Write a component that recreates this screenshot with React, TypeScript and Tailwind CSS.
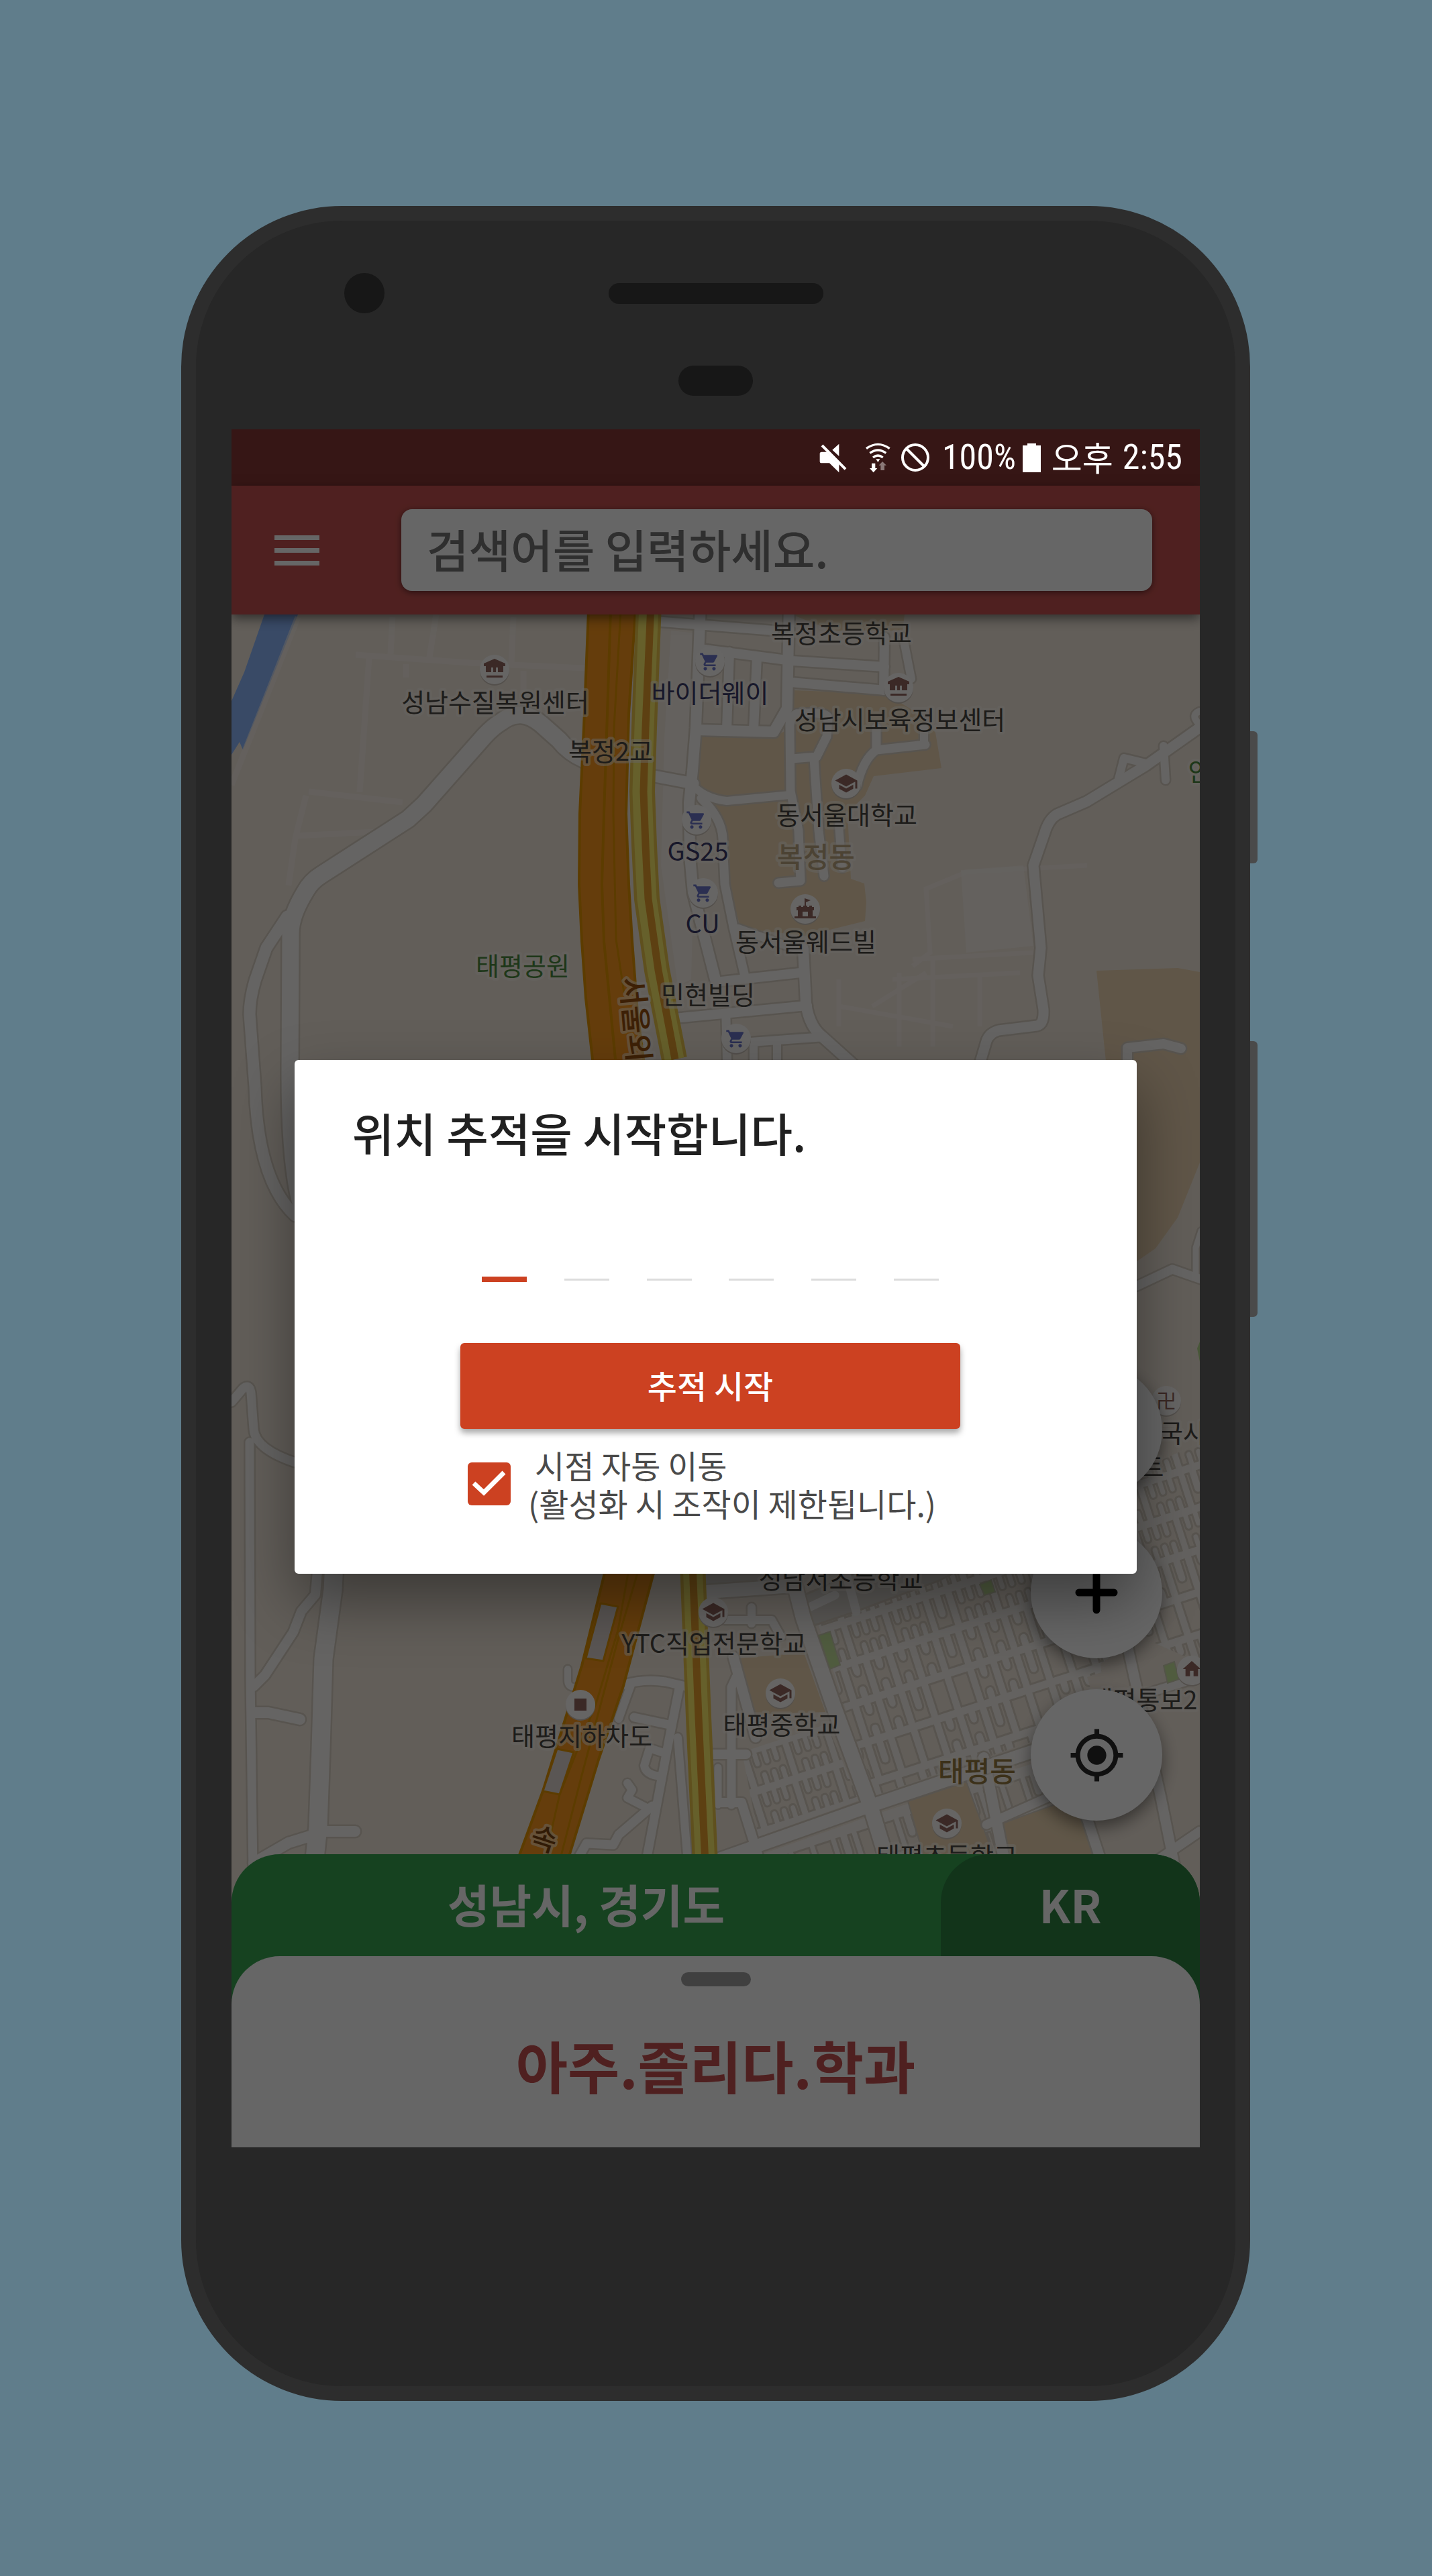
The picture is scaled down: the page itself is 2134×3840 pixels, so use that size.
import React from "react";
import { MdHome, MdMyLocation, MdSchool, MdShoppingCart } from "react-icons/md";

const CASING = "#dbd3c6";
const LAND = "#f5ebdf";
const SAND = "#efd8b4";
const ROAD = "#fdfaf8";

type Road = [string, number];

const westRoads: Road[] = [
  ["M871 1132 Q848 1122 833 1103 L806 1079 Q776 1054 747 1076 Q735 1083 722 1097 L632 1199 L608 1221 L479 1304 Q463 1314 455 1329 Q433 1365 433 1391 L432 1600 Q432 1740 450 1800", 25],
  ["M428 1366 L397 1413 L380 1462 Q372 1490 372 1512 L380 1620 Q384 1760 440 1812", 17],
  ["M345 2090 L362 2070 Q372 2062 374 2076 L378 2130 Q380 2160 440 2180", 13],
  ["M372 2150 L373 2500 L377 2790", 13],
  ["M498 2330 L496 2370 L482 2473 L478 2607 L474 2723 L467 2790", 27],
  ["M474 2330 L470 2377 L449 2402 L437 2433 L395 2497 L378 2514", 14],
  ["M378 2553 H400 L447 2563", 16],
  ["M480 2730 H529", 16],
  ["M472 2734 L430 2747 L378 2777", 16],
];

const townRoads: Road[] = [
  ["M975 926 L1153 940", 14],
  ["M1044 900 L1037 1085 L1032 1149 L1027 1196 L1028 1276 L1033 1331 L1066 1460", 16],
  ["M1050 968 L1180 985 L1318 994", 14],
  ["M1176 900 L1173 1056 L1153 1091 L1038 1088", 16],
  ["M1178 1017 L1320 1029", 14],
  ["M1087 972 L1083 1088", 14],
  ["M1128 980 L1123 1088", 14],
  ["M1318 950 L1317 1029", 14],
  ["M1346 950 L1358 1012", 12],
  ["M1187 1064 Q1176 1070 1177 1085 L1178 1179 L1190 1238 L1193 1313 L1160 1316", 13],
  ["M1180 1131 L1217 1128 L1232 1098 L1234 1070 Q1232 1060 1187 1064", 13],
  ["M1213 1130 L1220 1238 L1228 1306", 13],
  ["M1250 1230 L1255 1294", 12],
  ["M1277 1172 Q1286 1132 1306 1118 L1379 1110", 13],
  ["M1306 1084 V1116", 13],
  ["M1377 1085 V1110", 12],
  ["M970 1156 L1033 1168", 17],
  ["M1030 1168 Q1048 1190 1083 1194 L1177 1185", 12],
  ["M1045 1190 Q1076 1220 1077 1250 L1080 1318 L1093 1382 L1111 1460", 13],
  ["M1066 1464 L1193 1450", 14],
  ["M1004 1518 L1203 1499", 14],
  ["M1197 1414 L1201 1496 Q1206 1530 1225 1545 L1275 1590", 16],
  ["M1084 1556 L1222 1546", 13],
  ["M1082 1518 L1084 1600", 13],
  ["M1123 1556 V1600", 12],
  ["M1158 1554 V1600", 12],
  ["M1100 1384 L1150 1402 L1197 1418", 12],
  ["M1790 1083 L1708 1141 L1619 1195 L1575 1214 Q1562 1222 1556 1244 L1540 1290 L1551 1413 L1547 1454 L1555 1505 Q1556 1527 1545 1529 L1488 1536 Q1474 1540 1470 1552 L1456 1600", 15],
  ["M1666 1165 L1675 1130 L1712 1139", 12],
  ["M1734 1112 L1737 1163", 12],
  ["M1788 1060 Q1775 1065 1784 1076", 10],
  ["M1760 1563 L1734 1556 L1680 1562 V1600", 14],
  ["M1680 1921 L1694 1917 L1747 1892 L1790 1907", 13],
  ["M1790 1835 L1782 1860 V1900", 9],
];

const southRoads: Road[] = [
  ["M930 2511 Q960 2502 992 2507 L1022 2514", 13],
  ["M940 2512 L922 2562", 12],
  ["M1012 2517 L997 2593 L960 2790", 13],
  ["M945 2560 L997 2571", 13],
  ["M1010 2590 L1026 2790", 12],
  ["M992 2614 L968 2606 L960 2632 Q962 2646 985 2648", 12],
  ["M972 2692 L922 2735 L914 2750 L874 2748 L856 2780", 13],
  ["M935 2658 L942 2668 L935 2680 L962 2694", 12],
  ["M846 2488 V2505 Q846 2515 856 2515", 10],
  ["M1093 2470 L1126 2590", 15],
  ["M1097 2500 L1090 2515 V2690", 13],
  ["M1040 2615 H1112", 14],
  ["M1060 2687 H1105 L1134 2780", 14],
  ["M1070 2635 V2690", 11],
  ["M1120 2420 V2396", 12],
  ["M1080 2415 H1150 L1164 2440", 12],
  ["M1040 2374 L1180 2364", 20],
  ["M1176 2330 L1197 2412 L1243 2545 L1297 2692 L1330 2800", 22],
  ["M1062 2775 L1297 2692 L1550 2607 L1650 2570", 19],
];

const eastRoads: Road[] = [
  ["M1466 2620 L1500 2790", 16],
  ["M1470 2720 L1560 2680 L1610 2650", 13],
  ["M1675 2430 L1730 2680 L1752 2790", 15],
  ["M1610 2680 L1646 2790", 15],
  ["M1700 2790 L1788 2730", 14],
  ["M1690 2530 L1788 2500", 13],
];

function Roads({ roads }: { roads: Road[] }) {
  return (
    <g fill="none" strokeLinecap="round" strokeLinejoin="round">
      {roads.map(([d, w]) => (
        <path key={"c" + d} d={d} stroke={CASING} strokeWidth={w + 5} />
      ))}
      {roads.map(([d, w]) => (
        <path key={"r" + d} d={d} stroke={ROAD} strokeWidth={w} />
      ))}
    </g>
  );
}

const plainBlock = "M0 0H23V46H0Z";
const hourglassBlock = "M0 0H5V6Q5 16 12 16Q18 16 18 6V0H23V46H18V38Q18 30 12 30Q5 30 5 38V46H0Z";
const cupBlock = "M0 0H5V24Q5 32 12 32Q18 32 18 24V0H23V46H0Z";
const combBlock = "M0 0H4V14Q4 20 9 20Q14 20 14 14V0H19V14Q19 20 24 20Q29 20 29 14V0H34V14Q34 20 39 20Q44 20 44 14V0H52V46H48V34Q48 28 43 28Q38 28 38 34V46H34V34Q34 28 29 28Q24 28 24 34V46H19V34Q19 28 14 28Q9 28 9 34V46H0Z";

function BlockRow({ row, from, to }: { row: number; from: number; to: number }) {
  const blocks: React.ReactNode[] = [];
  let x = from;
  let i = 0;
  while (x < to) {
    const kind = (i + row * 2 + 40) % 5;
    const comb = row < 1 ? kind !== 0 : kind === 3 && row > 3;
    const shape = comb ? combBlock : kind === 0 ? cupBlock : row > 1 && kind < 3 ? plainBlock : hourglassBlock;
    blocks.push(<path key={i} d={shape} transform={`translate(${x} ${row * 60})`} />);
    x += comb ? 64 : 36;
    i += 1;
  }
  return <>{blocks}</>;
}

function Blocks() {
  return (
    <g>
      <clipPath id="east-blocks">
        <path d="M1200 2390L1420 2340L1560 2250L1700 2190L1790 2150V2490L1690 2520L1550 2592L1306 2676Z" />
      </clipPath>
      <clipPath id="west-blocks">
        <path d="M1106 2612L1232 2570L1280 2684L1130 2738Z" />
      </clipPath>
      <clipPath id="low-blocks">
        <path d="M1130 2766L1300 2706L1560 2622V2850H1130Z" />
      </clipPath>
      <g clipPath="url(#east-blocks)">
        <path d="M1190 2330L1790 2130V2520L1306 2690Z" fill="#faf6f1" />
        <g transform="translate(1222 2438) rotate(-18)" fill={LAND} stroke={CASING} strokeWidth="3">
          {[-5, -4, -3, -2, -1, 0, 1, 2, 3, 4].map((row) => (
            <BlockRow key={row} row={row} from={-120} to={640} />
          ))}
        </g>
      </g>
      <g clipPath="url(#west-blocks)">
        <path d="M1100 2560H1300V2760H1100Z" fill="#faf6f1" />
        <g transform="translate(1110 2620) rotate(-18)" fill={LAND} stroke={CASING} strokeWidth="3">
          {[-1, 0, 1, 2, 3].map((row) => (
            <g key={row} transform={`translate(${row * -4} ${row * 60})`}>
              <BlockRow row={0} from={-30} to={220} />
            </g>
          ))}
        </g>
      </g>
      <g clipPath="url(#low-blocks)">
        <path d="M1100 2600H1600V2860H1100Z" fill="#faf6f1" />
        <g transform="translate(1140 2776) rotate(-18)" fill={LAND} stroke={CASING} strokeWidth="3">
          {[0, 1, 2, 3].map((row) => (
            <g key={row} transform={`translate(0 ${row * 60})`}>
              {Array.from({ length: 16 }, (_, i) => (
                <path key={i} d={i % 3 === 1 ? cupBlock : plainBlock} transform={`translate(${i * 33 - 20} 0)`} />
              ))}
            </g>
          ))}
        </g>
      </g>
    </g>
  );
}

const DARK = "#4a4742";
const SHOP = "#3b3b69";

const labels: { t: string; x: number; y: number; c: string; big?: boolean }[] = [
  { t: "복정초등학교", x: 1254, y: 958, c: DARK },
  { t: "바이더웨이", x: 1058, y: 1047, c: SHOP },
  { t: "성남수질복원센터", x: 738, y: 1061, c: DARK },
  { t: "성남시보육정보센터", x: 1341, y: 1087, c: DARK },
  { t: "복정2교", x: 910, y: 1134, c: DARK },
  { t: "동서울대학교", x: 1262, y: 1229, c: DARK },
  { t: "복정동", x: 1216, y: 1293, c: "#bfa783", big: true },
  { t: "GS25", x: 1040, y: 1283, c: SHOP },
  { t: "CU", x: 1047, y: 1391, c: SHOP },
  { t: "동서울웨드빌", x: 1201, y: 1418, c: DARK },
  { t: "태평공원", x: 779, y: 1454, c: "#4d8a40" },
  { t: "민현빌딩", x: 1055, y: 1497, c: DARK },
  { t: "안", x: 1788, y: 1164, c: "#4d8a40" },
  { t: "국사", x: 1763, y: 2150, c: DARK },
  { t: "트", x: 1717, y: 2201, c: DARK },
  { t: "성남서초등학교", x: 1253, y: 2368, c: DARK },
  { t: "YTC직업전문학교", x: 1064, y: 2464, c: DARK },
  { t: "태평중학교", x: 1165, y: 2585, c: DARK },
  { t: "태평지하차도", x: 867, y: 2602, c: DARK },
  { t: "태평통보2", x: 1704, y: 2548, c: DARK },
  { t: "태평동", x: 1456, y: 2656, c: "#967a43", big: true },
  { t: "태평초등학교", x: 1411, y: 2781, c: DARK },
];

const pins: [string, number, number][] = [
  ["cart", 1058, 986],
  ["cart", 1038, 1222],
  ["cart", 1048, 1331],
  ["cart", 1097, 1548],
  ["hall", 737, 998],
  ["hall", 1339, 1025],
  ["school", 1261, 1168],
  ["fort", 1200, 1355],
  ["school", 1063, 2403],
  ["school", 1163, 2524],
  ["school", 1411, 2718],
  ["square", 865, 2541],
  ["home", 1776, 2490],
  ["temple", 1738, 2088],
];

function PinGlyph({ kind, x, y }: { kind: string; x: number; y: number }) {
  if (kind === "cart") return <MdShoppingCart x={x - 16} y={y - 15} size={31} color="#6c77cb" />;
  if (kind === "school") return <MdSchool x={x - 18} y={y - 18} size={36} color="#94685f" />;
  if (kind === "home") return <MdHome x={x - 16} y={y - 18} size={32} color="#94685f" />;
  if (kind === "fort")
    return (
      <g transform={`translate(${x} ${y})`} fill="#94685f">
        <path d="M-13 -3H-10V-5H-6V-3H-3V-5H3V-3H6V-5H10V-3H13V2H11V11H16V14H-16V11H-11V2H-13ZM-4 4V11H4V4Z" fillRule="evenodd" />
        <path d="M-1 -16L8 -13L1 -10V-4H-1Z" />
      </g>
    );
  if (kind === "hall")
    return (
      <g transform={`translate(${x} ${y})`} fill="#94685f">
        <path d="M0 -16L16 -9V-5H13V4H5V-3H2V4H-2V-3H-5V4H-13V-5H-16V-9Z" />
        <path d="M-12 9H12V12H-12Z" />
      </g>
    );
  if (kind === "square") return <rect x={x - 9} y={y - 9} width="18" height="18" fill="#94685f" />;
  return (
    <text x={x} y={y + 11} textAnchor="middle" fontSize="30" fill="#94685f">
      卍
    </text>
  );
}

function MapCanvas() {
  return (
    <svg
      className="block h-full w-full"
      viewBox="345 916 1443 1920"
      preserveAspectRatio="xMidYMin slice"
      role="img"
      aria-label="지도"
      fontFamily="'Noto Sans CJK KR', sans-serif"
    >
      <rect x="345" y="900" width="1443" height="1960" fill={LAND} />
      <path d="M394 916H444L362 1118L357 1106L345 1125V1045L364 1002Z" fill="#8fb9ff" />

      <g fill="none" stroke="#fbf5ef" strokeWidth="9" opacity=".6">
        <path d="M444 920L345 1170M530 976L700 988L872 996M550 980L536 1181M460 1180L600 1196M456 1186L440 1250L430 1320M650 916L640 980M765 920L762 990M585 920L582 975M605 990V1010M780 1000V1040M440 1246L560 1240" />
        <path d="M1620 1290L1440 1300L1380 1325L1386 1420L1360 1440M1360 1430L1540 1420M1330 1460L1520 1450M1300 1500L1380 1450M1250 1500L1420 1530M1390 1430V1560M1340 1450V1560M1460 1450V1530M1250 1460V1530" strokeWidth="7" />
      </g>
      <path d="M1432 1297L1525 1290L1540 1410L1440 1420Z" fill="#fbf6f1" opacity=".6" />
      <path d="M1000 940L1045 945L1030 1460L1010 1470L985 1290L990 1100Z" fill="#fbf6f1" opacity=".6" />

      <g fill={SAND}>
        <path d="M1180 916H1348L1345 940H1240Z" />
        <path d="M1041 1098L1150 1100L1177 1086L1176 1185L1083 1192L1040 1170Z" />
        <path d="M1182 1029L1320 1034L1362 1060L1394 1092L1403 1145L1302 1157L1289 1186L1263 1212L1268 1310L1288 1317L1291 1345L1289 1373L1200 1395L1104 1384L1084 1318L1080 1240L1050 1198L1178 1185Z" />
        <path d="M1634 1447L1755 1443L1788 1449V1733L1755 1815L1722 1861L1680 1890Z" />
        <path d="M1098 2472L1198 2464L1230 2552L1120 2556Z" />
      </g>
      <path d="M1050 2330H1180V2358L1052 2364Z" fill="#e2dcd4" />
      <path d="M1784 2010L1788 2000V2030Z" fill="#b7dd8f" />

      <Roads roads={westRoads} />
      <Roads roads={townRoads} />
      <Blocks />
      <path d="M1197 2378L1300 2335H1440L1400 2356L1276 2402L1204 2426Z" fill="#e2dcd4" stroke={CASING} strokeWidth="3" />
      <path d="M1206 2396L1244 2378M1262 2350L1276 2402" stroke={ROAD} strokeWidth="13" strokeLinecap="round" />
      <path d="M1640 2480L1700 2440L1790 2480V2850H1560L1560 2620L1650 2560Z" fill={LAND} />
      <path d="M1620 2500L1680 2480L1710 2620L1650 2600Z" fill={LAND} />
      <g fill={SAND} stroke={CASING} strokeWidth="2">
        <path d="M1353 2685L1440 2656L1480 2764L1380 2780Z" />
        <path d="M1483 2722L1572 2690L1608 2700L1634 2784H1500Z" />
      </g>
      <Roads roads={eastRoads} />
      <Roads roads={southRoads} />
      <g fill="#c8e69e" stroke="#cfd3b4" strokeWidth="2">
        <path d="M1220 2438L1237 2432L1252 2482L1237 2488Z" />
        <path d="M1460 2362L1477 2355L1483 2373L1467 2378Z" />
        <path d="M1734 2483L1750 2477L1757 2503L1740 2509Z" />
      </g>

      <g strokeLinejoin="round">
        <path
          d="M877 910L870 1085L864 1213L863 1318L867 1403L873 1488L883 1579L901 1800L910 2200L901 2345L867 2483L809 2670L765 2790H841L892 2623L929 2513L974 2345L990 2100L985 1800L959 1579L950 1509L942 1403L937 1318L933 1213L937 1064L947 910Z"
          fill="#fd991e"
          stroke="#e69600"
          strokeWidth="4"
        />
        <g fill="none" stroke="#e69600" strokeWidth="3">
          <path d="M910 910L905 1064L900 1213L897 1318L900 1403L917 1579" strokeWidth="4" />
          <path d="M925 910L915 1085L914 1213L918 1400L930 1480" />
          <path d="M936 2345L921 2430L888 2540L834 2675L808 2790M950 2345L922 2440L866 2650L830 2790" />
        </g>
        <path d="M895 2390L921 2395L899 2476L873 2472ZM830 2607L855 2612L834 2675L809 2670Z" fill="#e1d7d2" stroke="#e69600" strokeWidth="3" />
        <g fill="none">
          <path d="M967 900L960 1085L957 1180L960 1260L964 1340L979 1446L1005 1579M1032 2330L1041 2560L1052 2800" stroke="#edc94c" strokeWidth="38" />
          <path d="M967 900L960 1085L957 1180L960 1260L964 1340L979 1446L1005 1579M1032 2330L1041 2560L1052 2800" stroke="#fff06c" strokeWidth="29" />
          <path d="M970 900L962 1085L959 1180L962 1260L966 1340L981 1446L1006 1579M1032 2330L1041 2560L1052 2800" stroke="#e9a02d" strokeWidth="11" />
        </g>
      </g>

      {pins.map(([kind, x, y]) => (
        <g key={`${x}-${y}`}>
          <circle cx={x} cy={y + 2} r="22" fill="#cfc6bb" />
          <circle cx={x} cy={y} r="22" fill="#fffdfb" />
          <PinGlyph kind={kind} x={x} y={y} />
        </g>
      ))}

      <g stroke="#fffaf2" strokeOpacity=".55" strokeWidth="8" strokeLinejoin="round" paintOrder="stroke" textAnchor="middle">
        {labels.map((l) => (
          <text key={l.t} x={l.x} y={l.y} fill={l.c} fontSize={l.big ? 42 : 38} fontWeight={l.big ? 500 : 400}>
            {l.t}
          </text>
        ))}
        <text transform="translate(925 1458) rotate(85)" textAnchor="start" fontSize="46" fontWeight="500" fill="#98520f">
          서울외
        </text>
        <text transform="translate(806 2756) rotate(18)" fontSize="42" fontWeight="500" fill="#7c450f">
          속
        </text>
      </g>
    </svg>
  );
}

function StatusBar() {
  return (
    <div className="flex h-[84px] shrink-0 items-center justify-end bg-[#361615] pr-[26px] text-white">
      <svg className="mr-[27px] h-[45px] w-[42px]" viewBox="50 55 126 135" fill="currentColor" aria-hidden="true">
        <path d="M52 104q0-8 8-8H84L138 150V188L95 146H60q-8 0-8-8zM138 60V115L108 87z" />
        <path d="M62 67L167 173" stroke="currentColor" strokeWidth="12" />
      </svg>
      <svg className="mr-[15px] h-[45px] w-[37px]" viewBox="254 55 111 135" fill="none" stroke="currentColor" strokeWidth="10" aria-hidden="true">
        <path d="M257 81Q309 43 361 81M273 101Q309 75 345 101M287 121Q309 103 331 121" />
        <path d="M300 128H318L309 142Z" fill="currentColor" stroke="none" />
        <path d="M281 147h16v22h9l-17 19-17-19h9z" fill="currentColor" stroke="none" />
        <path d="M321 178h17v-22h9l-18-17-16 17h8z" fill="#8a7877" stroke="none" />
      </svg>
      <svg className="mr-[18px] h-[44px] w-[44px]" viewBox="0 0 44 44" fill="none" stroke="currentColor" strokeWidth="4" aria-hidden="true">
        <circle cx="22" cy="22" r="19" />
        <path d="M8 8L36 36" />
      </svg>
      <span className="font-['Roboto_Condensed',Roboto,sans-serif] text-[52px] leading-none">100%</span>
      <svg className="mr-[16px] ml-[10px] h-[43px] w-[27px]" viewBox="0 0 27 43" fill="currentColor" aria-hidden="true">
        <path d="M7 0H20V3H27V43H0V3H7z" />
      </svg>
      <span className="pb-1 font-['Noto_Sans_CJK_KR',sans-serif] text-[50px] leading-none">오후</span>
      <span className="ml-[14px] font-['Roboto_Condensed',Roboto,sans-serif] text-[52px] leading-none">2:55</span>
    </div>
  );
}

function AppBar() {
  return (
    <header className="relative z-10 flex h-[192px] shrink-0 items-center bg-[#c65250] pr-[71px] pl-[64px] shadow-[0_6px_16px_rgba(0,0,0,0.5)]">
      <button type="button" aria-label="메뉴" className="flex w-[67px] flex-col gap-3">
        <span className="h-[7px] w-full bg-white" />
        <span className="h-[7px] w-full bg-white" />
        <span className="h-[7px] w-full bg-white" />
      </button>
      <input
        type="text"
        aria-label="검색"
        placeholder="검색어를 입력하세요."
        className="ml-[122px] h-[122px] min-w-0 flex-1 rounded-2xl bg-white px-[38px] pb-1.5 text-[68px] font-medium text-[#222] shadow-[0_2px_10px_rgba(0,0,0,0.5)] outline-none placeholder:text-[#757575]"
      />
    </header>
  );
}

function MapButtons() {
  const fab = "flex size-[196px] items-center justify-center rounded-full bg-white shadow-[0_10px_24px_rgba(0,0,0,0.45)]";
  return (
    <div className="absolute right-[56px] bottom-[122px] flex flex-col gap-[46px]">
      <button type="button" aria-label="축소" className={fab} />
      <button type="button" aria-label="확대" className={fab}>
        <svg className="size-[64px]" viewBox="0 0 64 64" stroke="#000" strokeWidth="11" strokeLinecap="round" aria-hidden="true">
          <path d="M32 6V58M6 32H58" />
        </svg>
      </button>
      <button type="button" aria-label="내 위치" className={fab}>
        <MdMyLocation className="size-[85px] text-[#282828]" />
      </button>
    </div>
  );
}

function BottomSheet() {
  return (
    <section className="relative -mt-[72px]">
      <div className="flex h-[224px] overflow-hidden rounded-t-[72px] bg-[#37a552] text-[68px] font-bold text-white">
        <div className="flex h-[152px] flex-1 items-center justify-center pb-1">성남시, 경기도</div>
        <div className="h-full w-[386px] rounded-tl-[72px] bg-[#2d8243]">
          <div className="flex h-[152px] items-center justify-center pb-1">KR</div>
        </div>
      </div>
      <div className="relative -mt-[72px] flex h-[285px] flex-col items-center rounded-t-[72px] bg-white pt-6">
        <span className="h-[21px] w-[104px] rounded-full bg-[#a0a0a0]" />
        <h1 className="mt-[53px] text-[84px] leading-[128px] font-bold text-[#c65250]">아주.졸리다.학과</h1>
      </div>
    </section>
  );
}

function TrackingDialog() {
  return (
    <form
      role="dialog"
      aria-labelledby="dialog-title"
      onSubmit={(e) => e.preventDefault()}
      className="w-[87%] rounded-md bg-white pt-[68px] pr-4 pb-[77px] shadow-[0_40px_90px_rgba(0,0,0,0.4)]"
    >
      <h2 id="dialog-title" className="pl-[86px] text-[68px] leading-[80px] font-medium text-[#202020]">
        위치 추적을 시작합니다.
      </h2>
      <div className="mx-auto w-[745px]">
        <div className="mt-[103px] flex h-[80px] items-end justify-between px-8">
          <input aria-label="코드 1" maxLength={1} className="h-full w-[67px] border-b-8 border-[#cc4121] text-center text-5xl outline-none" />
          {[2, 3, 4, 5, 6].map((n) => (
            <input
              key={n}
              aria-label={`코드 ${n}`}
              maxLength={1}
              className="mb-[2px] h-[78px] w-[67px] border-b-[3px] border-[#dcdcdc] text-center text-5xl outline-none"
            />
          ))}
        </div>
        <button
          type="submit"
          className="mt-[91px] flex h-[128px] w-full items-center justify-center rounded-md bg-[#cc4121] pb-1 text-5xl font-medium text-white shadow-[0_6px_10px_rgba(0,0,0,0.35)]"
        >
          추적 시작
        </button>
        <label className="mt-[25px] flex items-center gap-[26px] pl-[11px] text-5xl leading-[57px] text-[#4a4a4a]">
          <span className="relative size-[64px] shrink-0">
            <input type="checkbox" defaultChecked className="block size-[64px] appearance-none rounded-md bg-[#cc4121]" />
            <svg className="absolute inset-0 size-[64px]" viewBox="0 0 64 64" fill="none" stroke="#fff" strokeWidth="7" aria-hidden="true">
              <path d="M9 31L24 45L54 15" />
            </svg>
          </span>
          <span className="whitespace-nowrap">
            <span className="block pl-2.5">시점 자동 이동</span>
            <span className="block">(활성화 시 조작이 제한됩니다.)</span>
          </span>
        </label>
      </div>
    </form>
  );
}

export default function App() {
  return (
    <main className="flex min-h-screen justify-center bg-[#607d8b] pt-[307px] pr-px pb-[261px] font-['Noto_Sans_CJK_KR',sans-serif]">
      <div className="relative w-full max-w-[1593px]">
        <span className="absolute top-[783px] left-full h-[197px] w-[11px] rounded-r-md bg-[#4a4a4a]" />
        <span className="absolute top-[1245px] left-full h-[411px] w-[11px] rounded-r-md bg-[#4a4a4a]" />
        <div className="rounded-[240px] border-[22px] border-[#2d2d2d] bg-[#272727] px-[53px] pb-[356px]">
          <div className="-mx-[53px] grid grid-cols-[1fr_320px_1fr] items-center pt-[78px]">
            <span className="ml-[221px] size-[60px] rounded-full bg-[#171717]" />
            <span className="h-[31px] rounded-full bg-[#171717]" />
          </div>
          <div className="mx-auto mt-[78px] mb-[50px] h-[45px] w-[111px] rounded-full bg-[#171717]" />
          <div className="overflow-hidden">
            <StatusBar />
            <div className="relative">
              <AppBar />
              <div className="relative h-[1920px]">
                <MapCanvas />
                <MapButtons />
              </div>
              <BottomSheet />
              <div className="absolute inset-0 z-20 flex items-center justify-center bg-black/60">
                <TrackingDialog />
              </div>
            </div>
          </div>
        </div>
      </div>
    </main>
  );
}
